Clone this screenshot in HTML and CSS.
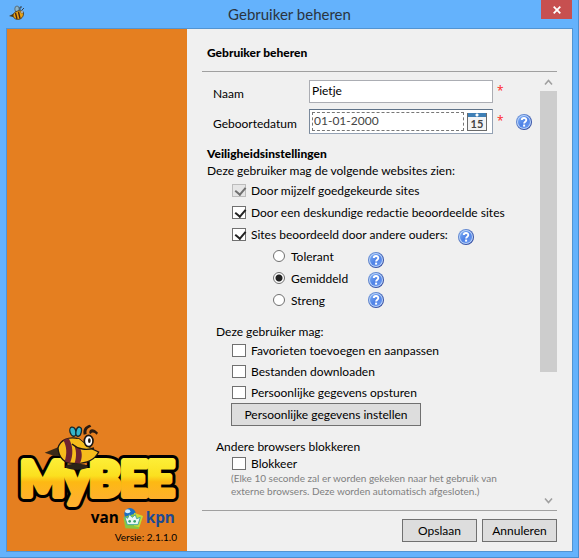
FILE: index.html
```
<!DOCTYPE html>
<html lang="nl">
<head>
    <meta charset="UTF-8">
    <meta name="viewport" content="width=device-width, initial-scale=1.0">
    <title>Gebruiker beheren</title>
    <link rel="stylesheet" href="styles.css">
</head>
<body>
    <!-- Gedeelde iconen -->
    <svg class="sprite" aria-hidden="true">
        <defs>
            <linearGradient id="helpFill" x1="0" y1="0" x2="1" y2="1">
                <stop offset="0" stop-color="#7fb0f5"/>
                <stop offset="0.5" stop-color="#4f82e6"/>
                <stop offset="1" stop-color="#6f9cf2"/>
            </linearGradient>
            <linearGradient id="helpRim" x1="0" y1="0" x2="1" y2="1">
                <stop offset="0" stop-color="#7ba6e8"/>
                <stop offset="1" stop-color="#1e3590"/>
            </linearGradient>
        </defs>
        <symbol id="help" viewBox="0 0 16 16">
            <circle cx="8" cy="8" r="8" fill="url(#helpRim)"/>
            <circle cx="8" cy="8" r="7" fill="#b9d3fa"/>
            <circle cx="8" cy="8" r="6" fill="url(#helpFill)"/>
            <path d="M5.8 6.1C5.8 3.3 10.3 3.3 10.3 6C10.3 7.7 8.1 7.7 8.1 9.6" fill="none" stroke="#fff" stroke-width="1.9"/>
            <rect x="7.1" y="10.6" width="2" height="2" fill="#fff"/>
        </symbol>
    </svg>

    <div class="window">
        <header class="titlebar">
            <svg class="app-icon" viewBox="0 0 16 16" aria-hidden="true">
                <path d="M0 11L6 8L8 11L4 12Z" fill="#4a3a1c"/>
                <ellipse cx="8" cy="4" rx="2.2" ry="3" fill="#8fb6c9" stroke="#4c5d66" stroke-width="0.8"/>
                <path d="M4 11C4 7 9 5 13 6C16 8 14 13 11 14C8 15 5 14 4 11Z" fill="#e8a317" stroke="#3b2a12" stroke-width="0.8"/>
                <path d="M6.5 8L8 14M9.5 7L11 13.5" stroke="#4a2412" stroke-width="1.4"/>
                <circle cx="13" cy="7" r="1.2" fill="#fff" stroke="#222" stroke-width="0.5"/>
                <path d="M11 5L11 2L13 2M13 5L15 3" fill="none" stroke="#333" stroke-width="0.9"/>
            </svg>
            <h1 class="window-title">Gebruiker beheren</h1>
            <button type="button" class="close-button" aria-label="Sluiten">
                <svg width="8" height="8" viewBox="0 0 8 8"><path d="M0.7 0.7L7.3 7.3M7.3 0.7L0.7 7.3" stroke="#fff" stroke-width="1.8"/></svg>
            </button>
        </header>

        <div class="content">
            <aside class="sidebar">
                <svg class="logo" viewBox="0 0 522 330" role="img" aria-label="MyBEE van kpn">
                    <defs>
                        <linearGradient id="honey" gradientUnits="userSpaceOnUse" x1="0" y1="110" x2="0" y2="290">
                            <stop offset="0" stop-color="#fdf03a"/>
                            <stop offset="0.32" stop-color="#fbe01f"/>
                            <stop offset="0.42" stop-color="#fdb913"/>
                            <stop offset="0.7" stop-color="#feb02c"/>
                            <stop offset="1" stop-color="#fdb52f"/>
                        </linearGradient>
                    </defs>
                    <g class="logo-text">
                        <text x="31" y="229" class="logo-outline">MyBEE</text>
                        <text x="31" y="229" class="logo-fill">MyBEE</text>
                    </g>
                    <!-- Bij -->
                    <ellipse cx="200" cy="140" rx="34" ry="9" fill="#2b2318"/>
                    <path d="M104 98L148 80L160 108L134 108Z" fill="#3a2a18"/>
                    <path d="M144 84C150 60 176 48 206 56L240 84L266 96C252 124 226 132 190 130C166 130 146 116 144 84Z" fill="#f6bc1c" stroke="#1d1710" stroke-width="4"/>
                    <path d="M160 60L176 55C190 78 190 106 180 129L164 124C172 100 170 80 160 60Z" fill="#6d2430"/>
                    <path d="M190 70L210 84C218 100 216 116 210 130L194 130C200 108 200 90 190 70Z" fill="#6d2430"/>
                    <path d="M206 56L240 84L252 84C230 92 204 88 186 72L192 58Z" fill="#f6bc1c"/>
                    <path d="M186 72C204 88 230 92 252 84" fill="none" stroke="#1d1710" stroke-width="4"/>
                    <ellipse cx="189" cy="35" rx="9" ry="14" transform="rotate(-18 189 35)" fill="#35b6cb" stroke="#14272d" stroke-width="4"/>
                    <ellipse cx="206" cy="35" rx="8" ry="14" transform="rotate(12 206 35)" fill="#35b6cb" stroke="#14272d" stroke-width="4"/>
                    <ellipse cx="236" cy="63" rx="13" ry="17" fill="#fff" stroke="#1d1710" stroke-width="5"/>
                    <ellipse cx="238" cy="62" rx="4" ry="7" fill="#1d1710"/>
                    <path d="M221 44C218 28 224 18 240 14L244 20C232 24 228 30 230 42ZM238 40C236 26 250 22 264 38L260 44C252 36 246 36 242 42Z" fill="#2a1a10"/>
                    <!-- van kpn -->
                    <text x="242" y="310" class="logo-van">van</text>
                    <circle cx="360" cy="281" r="17" fill="#1a6fc4"/>
                    <ellipse cx="353" cy="274" rx="8" ry="6" fill="#d4efff"/>
                    <path d="M340 292L346 325L386 327L398 290L372 282Z" fill="#8cc63f"/>
                    <path d="M372 278L399 288L388 322L372 318Z" fill="#c7dc35"/>
                    <path d="M344 290L353 295L358 284L367 292L376 284L380 296L391 292L384 314L352 314Z" fill="#e9f7f4" stroke="#45a89c" stroke-width="3"/>
                    <circle cx="359" cy="304" r="4" fill="#38a169"/>
                    <circle cx="374" cy="304" r="4" fill="#38a169"/>
                    <text x="407" y="310" class="logo-kpn">kpn</text>
                </svg>
                <p class="version">Versie: 2.1.1.0</p>
            </aside>

            <main class="panel">
                <h2 class="panel-title">Gebruiker beheren</h2>

                <form id="userForm" class="scroll-area">
                    <div class="fields">
                        <div class="field-row">
                            <label for="naam">Naam</label>
                            <input type="text" id="naam" class="text-input" value="Pietje">
                            <span class="required">*</span>
                        </div>
                        <div class="field-row">
                            <label for="geboortedatum">Geboortedatum</label>
                            <div class="date-box">
                                <input type="text" id="geboortedatum" class="date-input" value="01-01-2000">
                                <button type="button" class="calendar-button" aria-label="Kalender">
                                    <span class="calendar-top"></span>
                                    <span class="calendar-day">15</span>
                                </button>
                            </div>
                            <span class="required">*</span>
                            <svg class="help"><use href="#help"/></svg>
                        </div>

                        <h3 class="section-title">Veiligheidsinstellingen</h3>
                        <p class="intro">Deze gebruiker mag de volgende websites zien:</p>
                        <div class="checks">
                            <label class="check"><input type="checkbox" checked disabled>Door mijzelf goedgekeurde sites</label>
                            <label class="check"><input type="checkbox" checked>Door een deskundige redactie beoordeelde sites</label>
                            <div class="check-line">
                                <label class="check"><input type="checkbox" checked>Sites beoordeeld door andere ouders:</label>
                                <svg class="help"><use href="#help"/></svg>
                            </div>
                        </div>
                        <div class="levels">
                            <div class="level-options">
                                <label class="radio"><input type="radio" name="niveau">Tolerant</label>
                                <label class="radio"><input type="radio" name="niveau" checked>Gemiddeld</label>
                                <label class="radio"><input type="radio" name="niveau">Streng</label>
                            </div>
                            <div class="level-help">
                                <svg class="help"><use href="#help"/></svg>
                                <svg class="help"><use href="#help"/></svg>
                                <svg class="help"><use href="#help"/></svg>
                            </div>
                        </div>

                        <p class="group-title">Deze gebruiker mag:</p>
                        <div class="checks compact">
                            <label class="check"><input type="checkbox">Favorieten toevoegen en aanpassen</label>
                            <label class="check"><input type="checkbox">Bestanden downloaden</label>
                            <label class="check"><input type="checkbox">Persoonlijke gegevens opsturen</label>
                        </div>
                        <button type="button" class="button wide">Persoonlijke gegevens instellen</button>

                        <p class="group-title">Andere browsers blokkeren</p>
                        <div class="checks single">
                            <label class="check"><input type="checkbox">Blokkeer</label>
                        </div>
                        <p class="note">(Elke 10 seconde zal er worden gekeken naar het gebruik van externe browsers. Deze worden automatisch afgesloten.)</p>
                    </div>

                    <div class="scrollbar" aria-hidden="true">
                        <svg class="arrow" viewBox="0 0 17 17"><path d="M5 10.5L8.5 6.5L12 10.5" fill="none" stroke="#a0a0a0" stroke-width="1.6"/></svg>
                        <div class="track"><div class="thumb"></div></div>
                        <svg class="arrow" viewBox="0 0 17 17"><path d="M5 6.5L8.5 10.5L12 6.5" fill="none" stroke="#a0a0a0" stroke-width="1.6"/></svg>
                    </div>
                </form>

                <footer class="actions">
                    <button type="submit" form="userForm" class="button">Opslaan</button>
                    <button type="button" class="button">Annuleren</button>
                </footer>
            </main>
        </div>
    </div>
</body>
</html>
```
FILE: styles.css
```
* {
    margin: 0;
    padding: 0;
    box-sizing: border-box;
}

body {
    font-family: Lato, "Open Sans", sans-serif;
    font-size: 12px;
    font-variant-ligatures: none;
    line-height: 17px;
    color: #000;
}

input,
button {
    font: inherit;
    color: inherit;
}

.sprite {
    position: absolute;
    width: 0;
    height: 0;
}

/* Venster */
.window {
    display: flex;
    flex-direction: column;
    min-height: 100vh;
    padding: 0 5px 5px 6px;
    background-color: #64b2fc;
    border-right: 1px solid #4a8fd0;
    border-bottom: 1px solid #4a8fd0;
}

.titlebar {
    display: grid;
    grid-template-columns: 47px 1fr 47px;
    height: 28px;
}

.app-icon {
    width: 16px;
    height: 16px;
    margin: 5px 0 0 3px;
}

.window-title {
    font-size: 15px;
    font-weight: normal;
    line-height: 28px;
    text-align: center;
    color: #2a3440;
}

.close-button {
    width: 31px;
    height: 19px;
    margin-left: auto;
    margin-right: 1px;
    background-color: #c75050;
    border: none;
    line-height: 0;
}

.content {
    flex: 1;
    display: grid;
    grid-template-columns: 180px 1fr;
    background-color: #f0f0f0;
    border: 1px solid #5294d2;
}

/* Zijbalk met logo */
.sidebar {
    display: flex;
    flex-direction: column;
    justify-content: flex-end;
    padding: 0 3px 6px;
    background-color: #e57f20;
}

.logo {
    width: 174px;
    height: 110px;
}

.logo-text {
    font-size: 141px;
    font-weight: 900;
    stroke-linejoin: round;
}

.logo-outline {
    fill: #000;
    stroke: #000;
    stroke-width: 36px;
}

.logo-fill {
    fill: url(#honey);
    stroke: url(#honey);
    stroke-width: 18px;
}

.logo-van,
.logo-kpn {
    font-family: "Open Sans", sans-serif;
    font-size: 46px;
    font-weight: bold;
}

.logo-kpn {
    fill: #1d4a94;
}

.version {
    padding-right: 7px;
    font-size: 10px;
    line-height: 15px;
    text-align: right;
}

/* Paneel */
.panel {
    display: flex;
    flex-direction: column;
    padding: 0 15px 9px;
}

.panel-title {
    height: 43px;
    padding: 15px 5px 0;
    font-size: 12px;
    font-weight: 900;
    border-bottom: 1px solid #a0a0a0;
}

.scroll-area {
    flex: 1;
    display: flex;
    justify-content: space-between;
    border-bottom: 1px solid #a0a0a0;
}

.fields {
    flex: 1;
    padding: 8px 0 8px 5px;
}

.field-row {
    display: flex;
    align-items: center;
    margin-bottom: 6px;
}

.field-row label {
    width: 102px;
    padding: 3px 0 0 6px;
}

.text-input,
.date-box {
    width: 184px;
    background-color: #fff;
    border: 1px solid #abadb3;
}

.text-input {
    height: 23px;
    padding: 0 2px 3px;
}

.date-box {
    display: flex;
    align-items: center;
    gap: 3px;
    height: 25px;
    padding: 0 5px 0 2px;
    border-color: #5f7288 #93a1b3 #93a1b3 #7b8a9c;
}

.date-input {
    flex: 1;
    min-width: 0;
    height: 19px;
    padding: 0 1px 2px;
    background: none;
    border: 1px dashed #777;
    color: #444;
}

.calendar-button {
    display: flex;
    flex-direction: column;
    width: 20px;
    height: 18px;
    background-color: #f4f4f4;
    border: 1px solid #6b6b6b;
    border-top: none;
}

.calendar-top {
    height: 5px;
    background: radial-gradient(circle at 50% 50%, #fff 1px, #3f7fb5 2px);
}

.calendar-day {
    font-size: 11px;
    font-weight: bold;
    line-height: 13px;
    color: #444;
}

.required {
    width: 23px;
    padding: 0 0 2px 4px;
    font-family: "Open Sans", sans-serif;
    color: #f22;
}

.help {
    flex: none;
    width: 16px;
    height: 16px;
}

.section-title {
    margin-top: 11px;
    font-size: 12px;
    font-weight: 900;
}

/* Keuzevakjes en keuzerondjes */
.checks {
    padding-left: 25px;
}

.check-line {
    display: flex;
    align-items: flex-end;
    gap: 10px;
}

.check,
.radio {
    display: flex;
    align-items: center;
    height: 22px;
    gap: 5px;
}

.compact .check {
    height: 21px;
}

.single .check {
    height: 17px;
}

.check input {
    appearance: none;
    width: 14px;
    height: 13px;
    background-color: #fff;
    border: 1px solid #707070;
}

.check input:checked::before {
    content: "";
    display: block;
    width: 5px;
    height: 8px;
    margin: 0 0 0 4px;
    border: solid #222;
    border-width: 0 2px 2px 0;
    transform: rotate(40deg);
}

.check input:disabled {
    background-color: #e6e6e6;
    border-color: #bcbcbc;
}

.check input:disabled::before {
    border-color: #707070;
}

.levels {
    display: flex;
    padding-left: 66px;
}

.level-options {
    width: 95px;
}

.radio {
    gap: 6px;
}

.radio input {
    appearance: none;
    width: 12px;
    height: 12px;
    background-color: #fff;
    border: 1px solid #707070;
    border-radius: 50%;
}

.radio input:checked {
    background: radial-gradient(circle, #222 3px, #fff 4px);
}

.level-help {
    display: flex;
    flex-direction: column;
    gap: 4px;
    padding-top: 7px;
}

.group-title {
    margin-top: 12px;
    padding-left: 9px;
}

.button {
    width: 75px;
    height: 23px;
    background-color: #ddd;
    border: 1px solid #707070;
    line-height: 19px;
}

.button.wide {
    display: block;
    width: 190px;
    margin-left: 24px;
}

.note {
    max-width: 310px;
    padding-left: 24px;
    font-size: 10px;
    line-height: 13px;
    color: #808080;
}

/* Schuifbalk */
.scrollbar {
    display: flex;
    flex-direction: column;
    width: 17px;
    padding: 2px 0 1px;
}

.arrow {
    width: 17px;
    height: 17px;
}

.track {
    flex: 1;
}

.thumb {
    height: 70%;
    background-color: #cdcdcd;
}

.actions {
    display: flex;
    justify-content: flex-end;
    gap: 5px;
    padding-top: 8px;
}
```
